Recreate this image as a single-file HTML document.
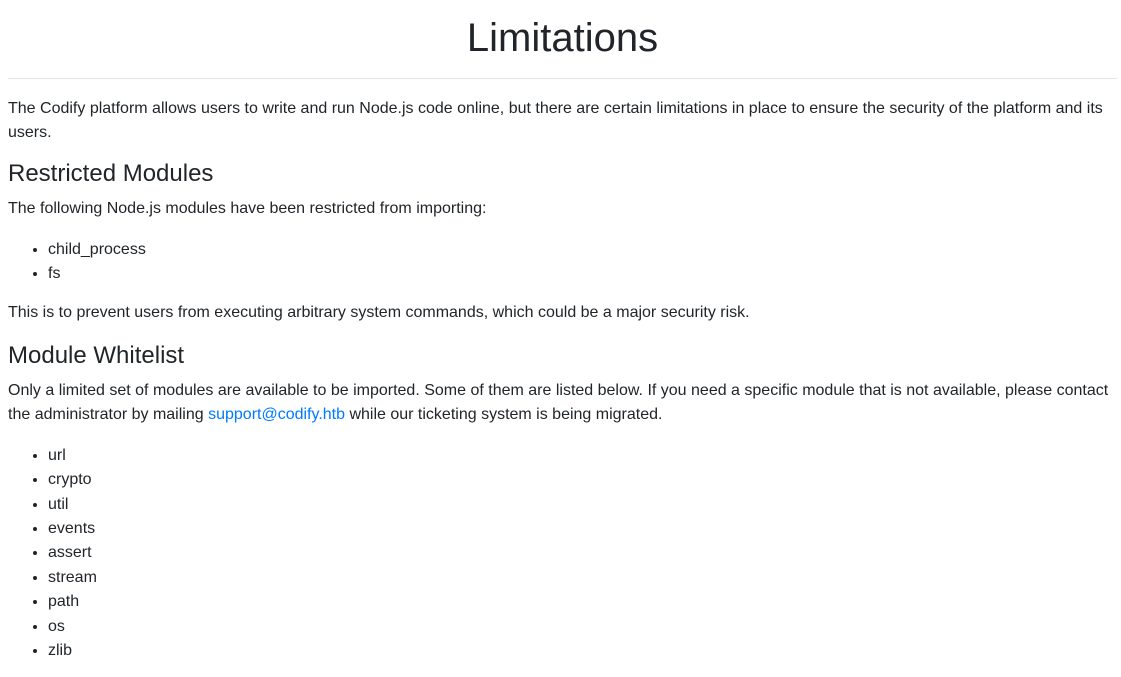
<!DOCTYPE html>
<html><head><meta charset="utf-8"><style>
body{margin:0;font-family:"Liberation Sans",Arial,sans-serif;font-size:16px;line-height:1.5;color:#212529;background:#fff}
.c{padding:14px 4px 0 8px}
h1{font-size:40px;font-weight:500;line-height:1.2;text-align:center;margin:0 0 8px}
hr{border:0;border-top:1px solid #e5e5e5;margin:16px 0 18px}
p{margin:0 0 16px}
p.f{margin-bottom:14px}
h3{font-size:24px;font-weight:500;line-height:1.25;margin:0 0 8px}
ul{margin:0 0 14px;padding:1px 0 0 40px}
li{line-height:24.4px}
a{color:#007bff;text-decoration:none}
</style></head><body><div class="c">
<h1>Limitations</h1>
<hr>
<p class="f">The Codify platform allows users to write and run Node.js code online, but there are certain limitations in place to ensure the security of the platform and its users.</p>
<h3>Restricted Modules</h3>
<p>The following Node.js modules have been restricted from importing:</p>
<ul><li>child_process</li><li>fs</li></ul>
<p>This is to prevent users from executing arbitrary system commands, which could be a major security risk.</p>
<h3>Module Whitelist</h3>
<p>Only a limited set of modules are available to be imported. Some of them are listed below. If you need a specific module that is not available, please contact the administrator by mailing <a href="#">support@codify.htb</a> while our ticketing system is being migrated.</p>
<ul><li>url</li><li>crypto</li><li>util</li><li>events</li><li>assert</li><li>stream</li><li>path</li><li>os</li><li>zlib</li></ul>
</div></body></html>
